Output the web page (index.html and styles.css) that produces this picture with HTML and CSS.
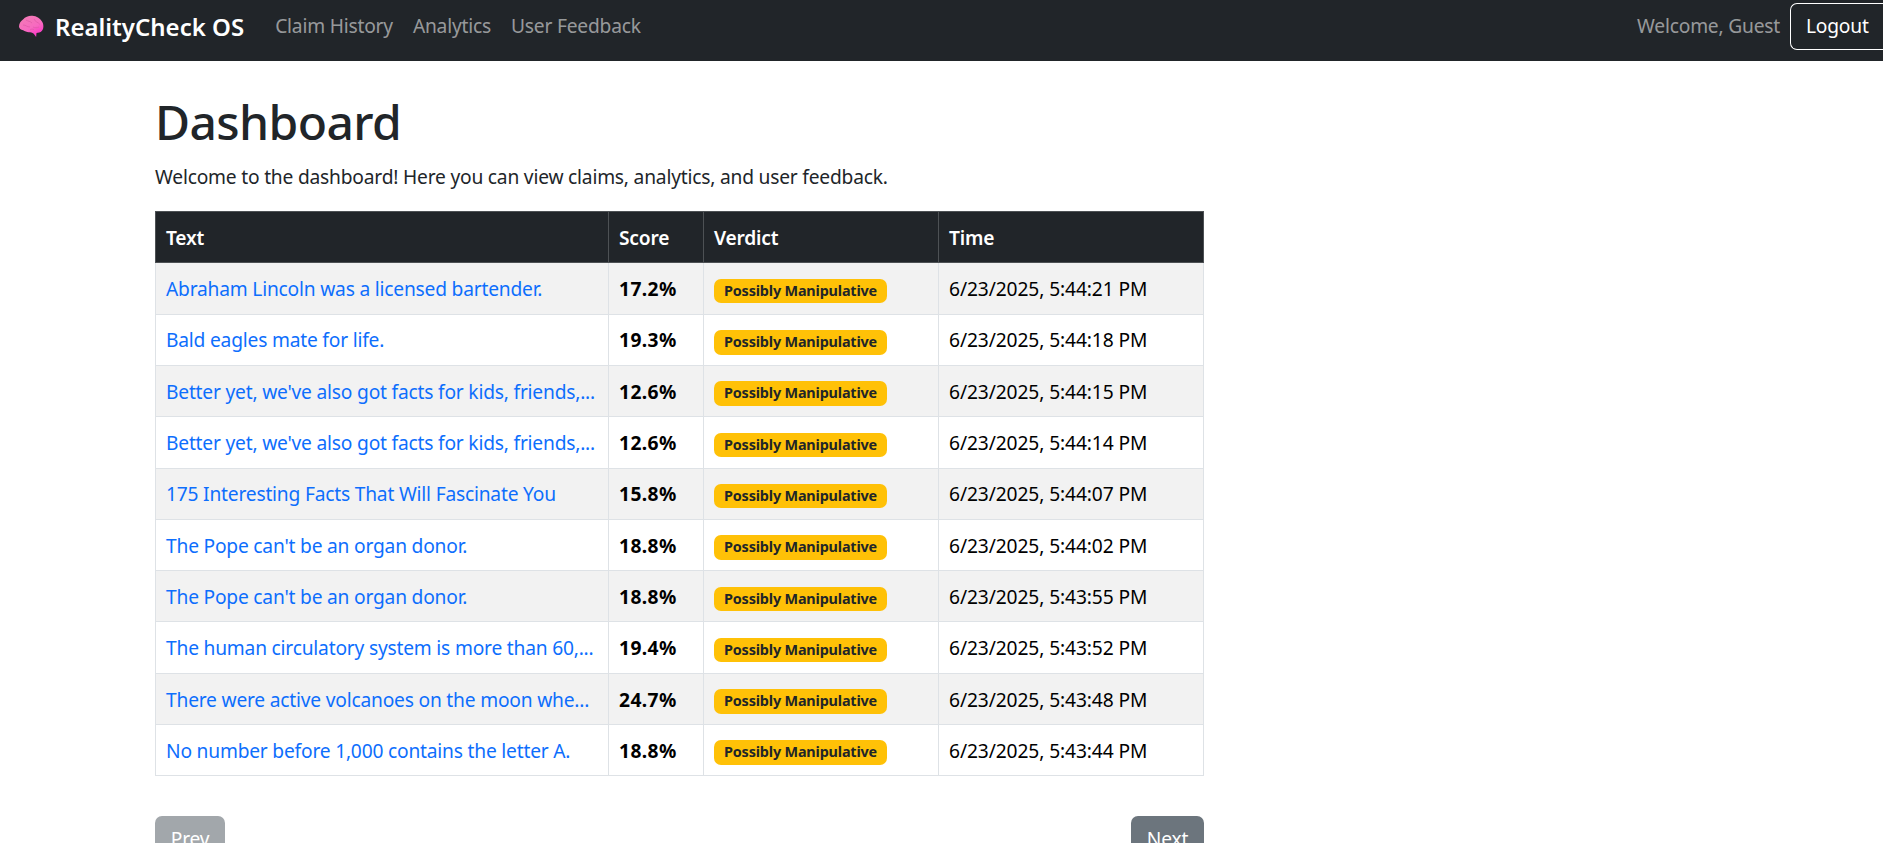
FILE: index.html
```html
<!DOCTYPE html>
<html lang="en">
<head>
    <meta charset="UTF-8">
    <meta name="viewport" content="width=device-width, initial-scale=1.0">
    <title>RealityCheck OS</title>
    <link rel="stylesheet" href="styles.css">
</head>
<body>
    <nav class="navbar">
        <a class="brand" href="#">
            <svg class="brand-icon" viewBox="0 0 26 23" width="26" height="23">
                <defs>
                    <linearGradient id="brain" x1="0.1" y1="0" x2="0.65" y2="1">
                        <stop offset="0" stop-color="#f27cb4"/>
                        <stop offset="0.6" stop-color="#f76ac0"/>
                        <stop offset="1" stop-color="#fc34c6"/>
                    </linearGradient>
                </defs>
                <path d="M1 11.500C1 8 3 6 5 4.500 7.500 1.500 11 .5 14.500 .8c4 .3 7.500 2.500 9.500 5.700 1.300 2 1.700 4.500 1.200 6.800-.5 2.200-2 3.700-4 4.200-1 .3-2 .2-2.700.4l-.4 4.100-2.300-3.300c-1.500-1.300-3.300-1.300-5-1.500-2-.2-4-.7-5.600-1.900C2.800 14.800 1 13.500 1 11.500z" fill="url(#brain)"/>
                <path d="M8 5c2 1.500 4 1 6 3M16 4c1 3 4 3 6 5.500M5 10c3 0 4 2 7 2M15 12c2 1 4 1 6 0M12 15c1-1 2-1 4-.5" fill="none" stroke="#df5ca8" stroke-width="0.8"/>
            </svg>
            <span>RealityCheck OS</span>
        </a>
        <ul class="nav-links">
            <li><a href="#">Claim History</a></li>
            <li><a href="#">Analytics</a></li>
            <li><a href="#">User Feedback</a></li>
        </ul>
        <div class="nav-user">
            <span class="welcome">Welcome, Guest</span>
            <button class="btn-logout">Logout</button>
        </div>
    </nav>

    <main class="content">
        <h1>Dashboard</h1>
        <p class="intro">Welcome to the dashboard! Here you can view claims, analytics, and user feedback.</p>

        <table class="claims">
            <thead>
                <tr>
                    <th class="col-text">Text</th>
                    <th class="col-score">Score</th>
                    <th class="col-verdict">Verdict</th>
                    <th class="col-time">Time</th>
                </tr>
            </thead>
            <tbody>
                <tr>
                    <td><a href="#">Abraham Lincoln was a licensed bartender.</a></td>
                    <td class="score">17.2%</td>
                    <td><span class="badge">Possibly Manipulative</span></td>
                    <td class="time">6/23/2025, 5:44:21 PM</td>
                </tr>
                <tr>
                    <td><a href="#">Bald eagles mate for life.</a></td>
                    <td class="score">19.3%</td>
                    <td><span class="badge">Possibly Manipulative</span></td>
                    <td class="time">6/23/2025, 5:44:18 PM</td>
                </tr>
                <tr>
                    <td><a href="#">Better yet, we've also got facts for kids, friends,...</a></td>
                    <td class="score">12.6%</td>
                    <td><span class="badge">Possibly Manipulative</span></td>
                    <td class="time">6/23/2025, 5:44:15 PM</td>
                </tr>
                <tr>
                    <td><a href="#">Better yet, we've also got facts for kids, friends,...</a></td>
                    <td class="score">12.6%</td>
                    <td><span class="badge">Possibly Manipulative</span></td>
                    <td class="time">6/23/2025, 5:44:14 PM</td>
                </tr>
                <tr>
                    <td><a href="#">175 Interesting Facts That Will Fascinate You</a></td>
                    <td class="score">15.8%</td>
                    <td><span class="badge">Possibly Manipulative</span></td>
                    <td class="time">6/23/2025, 5:44:07 PM</td>
                </tr>
                <tr>
                    <td><a href="#">The Pope can't be an organ donor.</a></td>
                    <td class="score">18.8%</td>
                    <td><span class="badge">Possibly Manipulative</span></td>
                    <td class="time">6/23/2025, 5:44:02 PM</td>
                </tr>
                <tr>
                    <td><a href="#">The Pope can't be an organ donor.</a></td>
                    <td class="score">18.8%</td>
                    <td><span class="badge">Possibly Manipulative</span></td>
                    <td class="time">6/23/2025, 5:43:55 PM</td>
                </tr>
                <tr>
                    <td><a href="#">The human circulatory system is more than 60,...</a></td>
                    <td class="score">19.4%</td>
                    <td><span class="badge">Possibly Manipulative</span></td>
                    <td class="time">6/23/2025, 5:43:52 PM</td>
                </tr>
                <tr>
                    <td><a href="#">There were active volcanoes on the moon whe...</a></td>
                    <td class="score">24.7%</td>
                    <td><span class="badge">Possibly Manipulative</span></td>
                    <td class="time">6/23/2025, 5:43:48 PM</td>
                </tr>
                <tr>
                    <td><a href="#">No number before 1,000 contains the letter A.</a></td>
                    <td class="score">18.8%</td>
                    <td><span class="badge">Possibly Manipulative</span></td>
                    <td class="time">6/23/2025, 5:43:44 PM</td>
                </tr>
            </tbody>
        </table>

        <div class="pager">
            <button class="btn-page btn-prev" disabled>Prev</button>
            <button class="btn-page btn-next">Next</button>
        </div>
    </main>
</body>
</html>
```

FILE: styles.css
```css
* {
    box-sizing: border-box;
}
html, body {
    height: 843px;
    overflow: hidden;
}
body {
    margin: 0;
    font-family: "Noto Sans", sans-serif;
    font-size: 19.2px;
    letter-spacing: -0.2px;
    line-height: 1.5;
    color: #212529;
    background-color: #fff;
}
a {
    text-decoration: none;
}

.navbar {
    display: flex;
    align-items: center;
    height: 61px;
    padding-left: 18px;
    padding-bottom: 8px;
    background-color: #212529;
}
.brand {
    display: flex;
    align-items: center;
    gap: 11px;
    color: #fff;
    font-size: 24px;
    font-weight: 600;
    letter-spacing: 0;
}
.brand-icon {
    flex: none;
}
.nav-links {
    display: flex;
    gap: 20px;
    margin: 0 0 0 31px;
    padding: 0;
    list-style: none;
}
.nav-links a {
    color: rgba(255, 255, 255, 0.55);
}
.nav-user {
    display: flex;
    align-items: center;
    gap: 10px;
    margin-left: auto;
}
.welcome {
    color: rgba(255, 255, 255, 0.55);
}
.btn-logout {
    height: 47px;
    width: 93px;
    padding: 0 15px;
    font: inherit;
    letter-spacing: inherit;
    color: #fff;
    background: transparent;
    border: 1px solid #fff;
    border-right: 0;
    border-radius: 7px 0 0 7px;
    text-align: left;
}

.content {
    width: 1049px;
    margin-left: 155px;
}
h1 {
    margin: 32px 0 12px;
    font-size: 48px;
    font-weight: 500;
    letter-spacing: -0.6px;
    line-height: 1.2;
}
.intro {
    margin: 0 0 20px;
}

.claims {
    width: 100%;
    table-layout: fixed;
    border-collapse: collapse;
}
.claims th {
    height: 51px;
    padding: 2px 10px 0;
    text-align: left;
    font-weight: 600;
    color: #fff;
    background-color: #212529;
    border: 1px solid #4d5154;
}
.claims td {
    height: 51.3px;
    padding: 2px 10px 0;
    color: #000;
    border: 1px solid #dee2e6;
}
.claims tbody tr:nth-child(odd) td {
    background-color: #f2f2f2;
}
.claims td a {
    color: #0d6efd;
}
.col-text {
    width: 453px;
}
.col-score {
    width: 95px;
}
.col-verdict {
    width: 235px;
}
.claims .score {
    font-weight: 700;
    letter-spacing: 0.4px;
}
.claims .time {
    letter-spacing: -0.1px;
}
.badge {
    display: inline-block;
    padding: 5px 10px;
    font-size: 14.4px;
    font-weight: 700;
    letter-spacing: -0.17px;
    line-height: 1;
    color: #212529;
    background-color: #ffc107;
    border-radius: 7px;
    vertical-align: middle;
}

.pager {
    display: flex;
    justify-content: space-between;
    margin-top: 40px;
}
.btn-page {
    height: 47px;
    padding: 0;
    font: inherit;
    letter-spacing: inherit;
    color: #fff;
    background-color: #6c757d;
    border: 0;
    border-radius: 7px;
}
.btn-prev {
    width: 70px;
    background-color: #a2a7ab;
}
.btn-next {
    width: 73px;
}
```
